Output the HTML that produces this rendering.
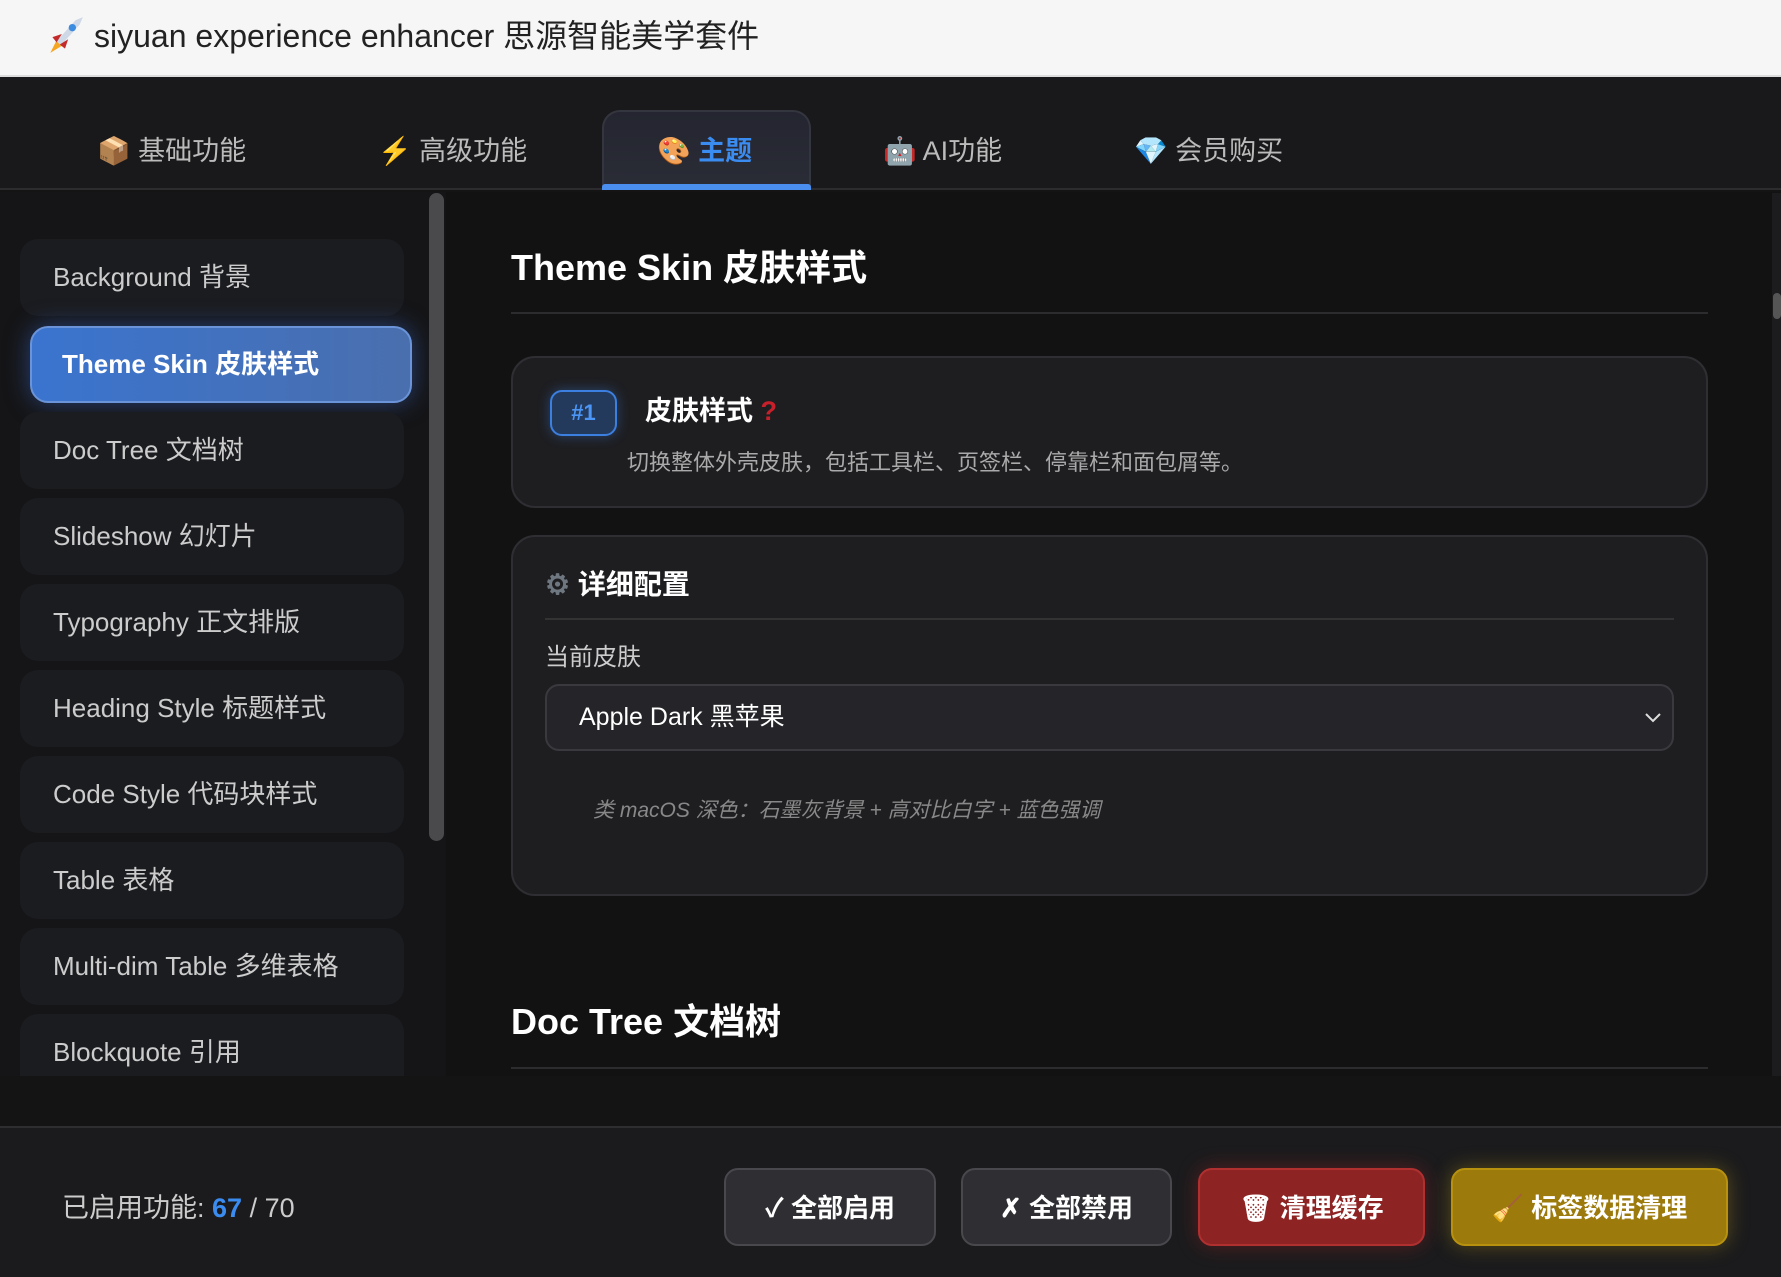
<!DOCTYPE html>
<html><head><meta charset="utf-8"><style>
*{box-sizing:border-box;margin:0;padding:0}
body{width:1781px;height:1277px;overflow:hidden;background:#141415;font-family:"Liberation Sans","Noto Sans CJK SC",sans-serif;color:#ddd;position:relative}
.abs{position:absolute}
#title{left:0;top:0;width:1781px;height:77px;background:#f6f6f6;border-bottom:2px solid #ddd}
#title span{position:absolute;left:94px;top:11px;font-size:32px;color:#222}
#tabs{left:0;top:77px;width:1781px;height:113px;background:#19191b;border-bottom:2px solid #2c2c2e}
.tab{position:absolute;top:52px;font-size:27px;color:#bbb;white-space:nowrap}
#act{left:602px;top:33px;width:209px;height:80px;background:linear-gradient(#242530,#2a2c36);border:2px solid #34363f;border-bottom:none;border-radius:18px 18px 0 0}
#act::after{content:"";position:absolute;left:-2px;right:-2px;bottom:0;height:6px;background:#4a8ff0;border-radius:3px 3px 0 0}
#side{left:0;top:192px;width:445px;height:884px;background:#151517}
.it{position:absolute;left:20px;width:384px;height:77px;border-radius:18px;background:#1b1c20;font-size:26px;color:#ccc;padding-left:33px;line-height:77px}
.it.on{left:30px;width:382px;background:linear-gradient(90deg,#3a74cf,#4a6fae);border:2px solid #6b94d8;color:#fff;font-weight:bold;line-height:73px;padding-left:30px;box-shadow:0 0 24px rgba(60,110,210,.5)}
#sb{left:429px;top:193px;width:15px;height:648px;background:#4a4a4d;border-radius:8px}
#content{left:446px;top:192px;width:1335px;height:884px;background:#121213}
h2{position:absolute;font-size:36px;color:#fff;font-weight:bold}
.hr{position:absolute;height:2px;background:#2c2c2e}
.card{position:absolute;left:511px;width:1197px;background:#1e1e21;border:2px solid #2f2f33;border-radius:24px}
#foot{left:0;top:1126px;width:1781px;height:151px;background:#1b1b1d;border-top:2px solid #2e2e30}
.btn{position:absolute;top:1168px;height:78px;border-radius:14px;font-size:26px;font-weight:bold;color:#fff;text-align:center;line-height:76px}
</style></head><body>
<div id="title" class="abs"><svg class="abs" style="left:44px;top:14px" width="42" height="42" viewBox="0 0 40 40"><path d="M6 37 L13 23 L19 29 Z" fill="#f5a623"/><path d="M12 26 L30 6 L37 3 L34 10 L16 30 Z" fill="#cfd8e6"/><circle cx="27" cy="13" r="3.5" fill="#3b8be0"/><path d="M8 22 L17 19 L12 27Z M20 33 L23 24 L15 29Z" fill="#c52a2a"/></svg><span>siyuan experience enhancer 思源智能美学套件</span></div>
<div id="tabs" class="abs">
<div id="act" class="abs"></div>
<div class="tab" style="left:97px">📦 基础功能</div>
<div class="tab" style="left:378px">⚡ 高级功能</div>
<div class="tab" style="left:657px;color:#3b8cf0;font-weight:bold">🎨 主题</div>
<div class="tab" style="left:883px">🤖 AI功能</div>
<div class="tab" style="left:1134px">💎 会员购买</div>
</div>
<div id="side" class="abs">
<div class="it" style="top:47px">Background 背景</div>
<div class="it on" style="top:134px">Theme Skin 皮肤样式</div>
<div class="it" style="top:220px">Doc Tree 文档树</div>
<div class="it" style="top:306px">Slideshow 幻灯片</div>
<div class="it" style="top:392px">Typography 正文排版</div>
<div class="it" style="top:478px">Heading Style 标题样式</div>
<div class="it" style="top:564px">Code Style 代码块样式</div>
<div class="it" style="top:650px">Table 表格</div>
<div class="it" style="top:736px">Multi-dim Table 多维表格</div>
<div class="it" style="top:822px;height:62px;border-radius:18px 18px 0 0">Blockquote 引用</div>
</div>
<div id="sb" class="abs"></div>
<div id="content" class="abs"></div>
<div class="abs" style="left:1772px;top:193px;width:9px;height:883px;background:#1c1c1e"></div>
<div class="abs" style="left:1773px;top:293px;width:8px;height:26px;background:#555;border-radius:4px"></div>
<h2 style="left:511px;top:239px">Theme Skin 皮肤样式</h2>
<div class="hr" style="left:511px;top:312px;width:1197px"></div>
<div class="card" style="top:356px;height:152px">
<div class="abs" style="left:37px;top:32px;width:67px;height:46px;border:2px solid #3b7fe0;border-radius:12px;background:#243a5c;color:#4a95f5;font-weight:bold;font-size:22px;text-align:center;line-height:42px;box-shadow:0 0 12px rgba(60,130,230,.4)">#1</div>
<div class="abs" style="left:132px;top:31px;font-size:27px;font-weight:bold;color:#fff">皮肤样式 <span style="color:#c8202a">?</span></div>
<div class="abs" style="left:114px;top:87px;font-size:22px;color:#aaa">切换整体外壳皮肤，包括工具栏、页签栏、停靠栏和面包屑等。</div>
</div>
<div class="card" style="top:535px;height:361px">
<div class="abs" style="left:32px;top:26px;font-size:28px;font-weight:bold;color:#fff"><span style="color:#6e7680">⚙</span> 详细配置</div>
<div class="hr" style="left:32px;top:81px;width:1129px;background:#333"></div>
<div class="abs" style="left:32px;top:100px;font-size:24px;color:#ccc">当前皮肤</div>
<div class="abs" style="left:32px;top:147px;width:1129px;height:67px;border:2px solid #3a3a3e;border-radius:14px;background:#242429;font-size:25px;color:#fff;padding-left:32px;line-height:63px">Apple Dark 黑苹果<svg class="abs" style="right:10px;top:26px" width="18" height="12" viewBox="0 0 18 12"><path d="M2 2 L9 9 L16 2" stroke="#ddd" stroke-width="2" fill="none"/></svg></div>
<div class="abs" style="left:80px;top:257px;font-size:21px;color:#888;font-style:italic">类 macOS 深色：石墨灰背景 + 高对比白字 + 蓝色强调</div>
</div>
<h2 style="left:511px;top:993px">Doc Tree 文档树</h2>
<div class="hr" style="left:511px;top:1067px;width:1197px"></div>
<div id="foot" class="abs"></div>
<div class="abs" style="left:62px;top:1186px;font-size:27px;color:#ccc">已启用功能: <span style="color:#3b8cf0;font-weight:bold">67</span> / 70</div>
<div class="btn" style="left:724px;width:212px;background:#2e2e33;border:2px solid #48484d">✓ 全部启用</div>
<div class="btn" style="left:961px;width:211px;background:#2e2e33;border:2px solid #48484d">✗ 全部禁用</div>
<div class="btn" style="left:1198px;width:227px;background:#8e2323;border:2px solid #b03030;box-shadow:0 0 20px rgba(200,40,40,.35)">🗑 清理缓存</div>
<div class="btn" style="left:1451px;width:277px;background:#9c7a0c;border:2px solid #b8920f;box-shadow:0 0 20px rgba(210,170,20,.35)">🧹 标签数据清理</div>
</body></html>
